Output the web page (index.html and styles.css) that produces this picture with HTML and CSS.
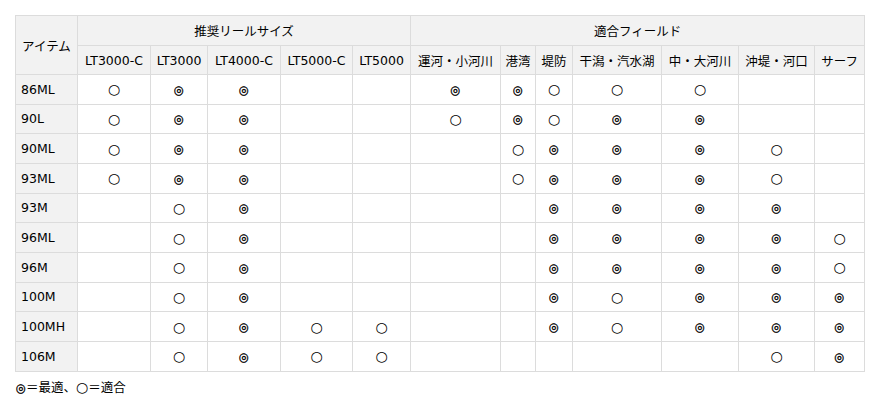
FILE: index.html
```html
<!DOCTYPE html>
<html lang="ja">
<head>
<meta charset="utf-8">
<title>推奨リールサイズ・適合フィールド</title>
<link rel="stylesheet" href="styles.css">
</head>
<body>
<div class="wrap">
<table class="spec">
  <colgroup>
    <col class="c-item">
    <col class="c-73"><col class="c-57"><col class="c-73"><col class="c-72"><col class="c-58">
    <col class="c-90"><col class="c-35"><col class="c-37"><col class="c-89"><col class="c-77"><col class="c-76"><col class="c-50">
  </colgroup>
  <thead>
    <tr class="h1">
      <th rowspan="2" class="item-h">アイテム</th>
      <th colspan="5">推奨リールサイズ</th>
      <th colspan="7">適合フィールド</th>
    </tr>
    <tr class="h2">
      <th>LT3000-C</th><th>LT3000</th><th>LT4000-C</th><th>LT5000-C</th><th>LT5000</th>
      <th>運河・小河川</th><th>港湾</th><th>堤防</th><th>干潟・汽水湖</th><th>中・大河川</th><th>沖堤・河口</th><th>サーフ</th>
    </tr>
  </thead>
  <tbody>
    <tr><th>86ML</th><td><span class="o">○</span></td><td><span class="w">◎</span></td><td><span class="w">◎</span></td><td></td><td></td><td><span class="w">◎</span></td><td><span class="w">◎</span></td><td><span class="o">○</span></td><td><span class="o">○</span></td><td><span class="o">○</span></td><td></td><td></td></tr>
    <tr><th>90L</th><td><span class="o">○</span></td><td><span class="w">◎</span></td><td><span class="w">◎</span></td><td></td><td></td><td><span class="o">○</span></td><td><span class="w">◎</span></td><td><span class="o">○</span></td><td><span class="w">◎</span></td><td><span class="w">◎</span></td><td></td><td></td></tr>
    <tr><th>90ML</th><td><span class="o">○</span></td><td><span class="w">◎</span></td><td><span class="w">◎</span></td><td></td><td></td><td></td><td><span class="o">○</span></td><td><span class="w">◎</span></td><td><span class="w">◎</span></td><td><span class="w">◎</span></td><td><span class="o">○</span></td><td></td></tr>
    <tr><th>93ML</th><td><span class="o">○</span></td><td><span class="w">◎</span></td><td><span class="w">◎</span></td><td></td><td></td><td></td><td><span class="o">○</span></td><td><span class="w">◎</span></td><td><span class="w">◎</span></td><td><span class="w">◎</span></td><td><span class="o">○</span></td><td></td></tr>
    <tr><th>93M</th><td></td><td><span class="o">○</span></td><td><span class="w">◎</span></td><td></td><td></td><td></td><td></td><td><span class="w">◎</span></td><td><span class="w">◎</span></td><td><span class="w">◎</span></td><td><span class="w">◎</span></td><td></td></tr>
    <tr><th>96ML</th><td></td><td><span class="o">○</span></td><td><span class="w">◎</span></td><td></td><td></td><td></td><td></td><td><span class="w">◎</span></td><td><span class="w">◎</span></td><td><span class="w">◎</span></td><td><span class="w">◎</span></td><td><span class="o">○</span></td></tr>
    <tr><th>96M</th><td></td><td><span class="o">○</span></td><td><span class="w">◎</span></td><td></td><td></td><td></td><td></td><td><span class="w">◎</span></td><td><span class="w">◎</span></td><td><span class="w">◎</span></td><td><span class="w">◎</span></td><td><span class="o">○</span></td></tr>
    <tr><th>100M</th><td></td><td><span class="o">○</span></td><td><span class="w">◎</span></td><td></td><td></td><td></td><td></td><td><span class="w">◎</span></td><td><span class="o">○</span></td><td><span class="w">◎</span></td><td><span class="w">◎</span></td><td><span class="w">◎</span></td></tr>
    <tr><th>100MH</th><td></td><td><span class="o">○</span></td><td><span class="w">◎</span></td><td><span class="o">○</span></td><td><span class="o">○</span></td><td></td><td></td><td><span class="w">◎</span></td><td><span class="o">○</span></td><td><span class="w">◎</span></td><td><span class="w">◎</span></td><td><span class="w">◎</span></td></tr>
    <tr><th>106M</th><td></td><td><span class="o">○</span></td><td><span class="w">◎</span></td><td><span class="o">○</span></td><td><span class="o">○</span></td><td></td><td></td><td></td><td></td><td></td><td><span class="o">○</span></td><td><span class="w">◎</span></td></tr>
  </tbody>
</table>
<p class="legend"><span class="w">◎</span>＝最適、<span class="o">○</span>＝適合</p>
</div>
</body>
</html>
```

FILE: styles.css
```css
html, body {
  margin: 0;
  padding: 0;
  background: #fff;
}
body {
  font-family: "DejaVu Sans", "Noto Sans CJK JP", sans-serif;
  font-size: 12.5px;
  color: #000;
}
.wrap {
  padding: 15px 0 0 15px;
}
.spec {
  border-collapse: collapse;
  table-layout: fixed;
  width: 850px;
}
.c-item { width: 62px; }
.c-73 { width: 73px; }
.c-57 { width: 57px; }
.c-72 { width: 72px; }
.c-58 { width: 58px; }
.c-90 { width: 90px; }
.c-35 { width: 35px; }
.c-37 { width: 37px; }
.c-89 { width: 89px; }
.c-77 { width: 77px; }
.c-76 { width: 76px; }
.c-50 { width: 50px; }

.spec th, .spec td {
  border: 1px solid #dcdcdc;
  padding: 0;
  text-align: center;
  vertical-align: middle;
  font-weight: normal;
  white-space: nowrap;
}
.spec thead th {
  background: #f2f2f2;
}
.spec tr.h1 { height: 30px; }
.spec tr.h2 { height: 29px; }
.spec tbody tr { height: 29.67px; }
.spec tbody th {
  background: #f2f2f2;
  text-align: left;
  padding-left: 5px;
}
.spec thead th.item-h {
  text-align: center;
}
.o {
  font-family: "DejaVu Sans", sans-serif;
  font-size: 14px;
  color: #000;
}
.w {
  font-family: "DejaVu Sans", sans-serif;
  font-size: 11.5px;
  font-weight: bold;
  color: #000;
  -webkit-text-stroke: 0.35px #000;
}
.legend {
  margin: 7px 0 0 1px;
  line-height: 16px;
}
```
